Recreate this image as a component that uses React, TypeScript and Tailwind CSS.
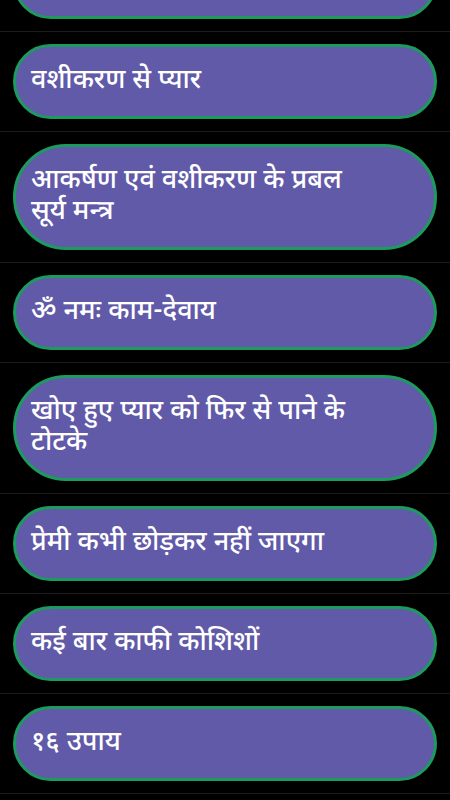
const items: string[][] = [
  ["प्रेम वशीकरण"],
  ["वशीकरण से प्यार"],
  ["आकर्षण एवं वशीकरण के प्रबल", "सूर्य मन्त्र"],
  ["ॐ नमः काम-देवाय"],
  ["खोए हुए प्यार को फिर से पाने के", "टोटके"],
  ["प्रेमी कभी छोड़कर नहीं जाएगा"],
  ["कई बार काफी कोशिशों"],
  ["१६ उपाय"],
];

function Row({ lines, first }: { lines: string[]; first?: boolean }) {
  return (
    <div className={`border-b border-[#1c1c1c] px-[13px] py-3 ${first ? "-mt-[68px]" : ""}`}>
      <button className="w-full text-left rounded-full border-[3px] border-[#1d9a5e] bg-[#615aa8] pl-[15px] pr-[15px] py-[19px] text-white text-[27px] leading-[31px] font-medium">
        {lines.map((l, i) => (
          <div key={i}>{l}</div>
        ))}
      </button>
    </div>
  );
}

export default function App() {
  return (
    <div
      className="w-[450px] h-[800px] overflow-hidden bg-black"
      style={{ fontFamily: '"Noto Sans Devanagari", "Noto Sans", "Lohit Devanagari", sans-serif' }}
    >
      {items.map((lines, i) => (
        <Row key={i} lines={lines} first={i === 0} />
      ))}
    </div>
  );
}
